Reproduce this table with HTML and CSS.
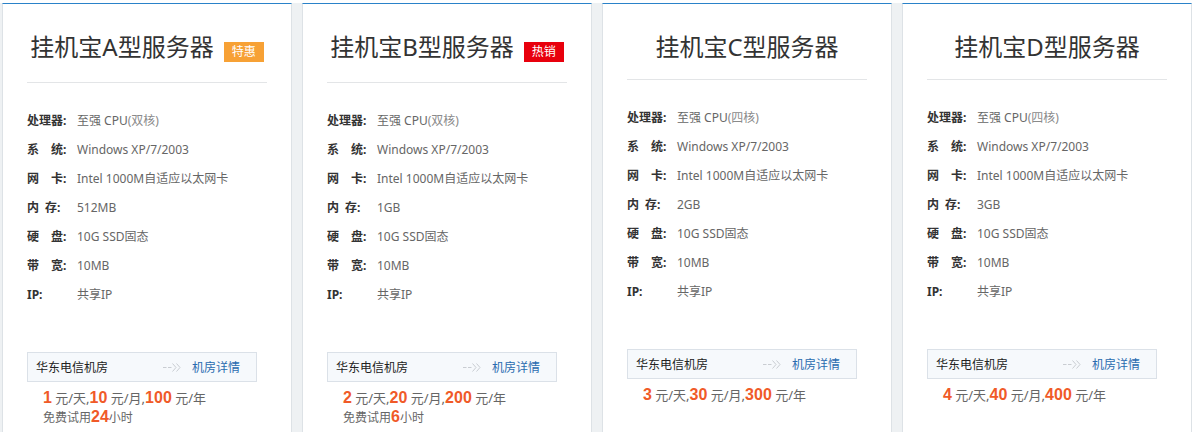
FILE: index.html
```html
<!DOCTYPE html>
<html lang="zh-CN">
<head>
<meta charset="utf-8">
<title>挂机宝服务器</title>
<link rel="stylesheet" href="styles.css">
</head>
<body>
<div class="row">
  <div class="card">
    <h3 class="title">挂机宝A型服务器<span class="badge badge-sale">特惠</span></h3>
    <ul class="specs">
      <li><span class="lbl">处理器:</span><span class="val">至强 CPU<span class="dim">(双核)</span></span></li>
      <li><span class="lbl">系&emsp;统:</span><span class="val">Windows XP/7/2003</span></li>
      <li><span class="lbl">网&emsp;卡:</span><span class="val">Intel 1000M自适应以太网卡</span></li>
      <li><span class="lbl">内&ensp;存:</span><span class="val">512MB</span></li>
      <li><span class="lbl">硬&emsp;盘:</span><span class="val">10G SSD固态</span></li>
      <li><span class="lbl">带&emsp;宽:</span><span class="val">10MB</span></li>
      <li><span class="lbl">IP:</span><span class="val">共享IP</span></li>
    </ul>
    <div class="room">
      <span class="room-name">华东电信机房</span>
      <span class="room-link"><svg class="arrow" width="18" height="10" viewBox="0 0 18 10"><path d="M0 5.5H3.5M5 5.5H8.5" stroke="#c9cdd2" fill="none"/><path d="M9.5 1.5L13 5.5L9.5 9.5M13.5 1.5L17 5.5L13.5 9.5" stroke="#c9cdd2" fill="none"/></svg><a class="detail">机房详情</a></span>
    </div>
    <p class="price"><b>1</b> 元/天,<b>10</b> 元/月,<b>100</b> 元/年</p>
    <p class="trial">免费试用<b>24</b>小时</p>
  </div>
  <div class="card">
    <h3 class="title">挂机宝B型服务器<span class="badge badge-hot">热销</span></h3>
    <ul class="specs">
      <li><span class="lbl">处理器:</span><span class="val">至强 CPU<span class="dim">(双核)</span></span></li>
      <li><span class="lbl">系&emsp;统:</span><span class="val">Windows XP/7/2003</span></li>
      <li><span class="lbl">网&emsp;卡:</span><span class="val">Intel 1000M自适应以太网卡</span></li>
      <li><span class="lbl">内&ensp;存:</span><span class="val">1GB</span></li>
      <li><span class="lbl">硬&emsp;盘:</span><span class="val">10G SSD固态</span></li>
      <li><span class="lbl">带&emsp;宽:</span><span class="val">10MB</span></li>
      <li><span class="lbl">IP:</span><span class="val">共享IP</span></li>
    </ul>
    <div class="room">
      <span class="room-name">华东电信机房</span>
      <span class="room-link"><svg class="arrow" width="18" height="10" viewBox="0 0 18 10"><path d="M0 5.5H3.5M5 5.5H8.5" stroke="#c9cdd2" fill="none"/><path d="M9.5 1.5L13 5.5L9.5 9.5M13.5 1.5L17 5.5L13.5 9.5" stroke="#c9cdd2" fill="none"/></svg><a class="detail">机房详情</a></span>
    </div>
    <p class="price"><b>2</b> 元/天,<b>20</b> 元/月,<b>200</b> 元/年</p>
    <p class="trial">免费试用<b>6</b>小时</p>
  </div>
  <div class="card">
    <h3 class="title">挂机宝C型服务器</h3>
    <ul class="specs">
      <li><span class="lbl">处理器:</span><span class="val">至强 CPU<span class="dim">(四核)</span></span></li>
      <li><span class="lbl">系&emsp;统:</span><span class="val">Windows XP/7/2003</span></li>
      <li><span class="lbl">网&emsp;卡:</span><span class="val">Intel 1000M自适应以太网卡</span></li>
      <li><span class="lbl">内&ensp;存:</span><span class="val">2GB</span></li>
      <li><span class="lbl">硬&emsp;盘:</span><span class="val">10G SSD固态</span></li>
      <li><span class="lbl">带&emsp;宽:</span><span class="val">10MB</span></li>
      <li><span class="lbl">IP:</span><span class="val">共享IP</span></li>
    </ul>
    <div class="room">
      <span class="room-name">华东电信机房</span>
      <span class="room-link"><svg class="arrow" width="18" height="10" viewBox="0 0 18 10"><path d="M0 5.5H3.5M5 5.5H8.5" stroke="#c9cdd2" fill="none"/><path d="M9.5 1.5L13 5.5L9.5 9.5M13.5 1.5L17 5.5L13.5 9.5" stroke="#c9cdd2" fill="none"/></svg><a class="detail">机房详情</a></span>
    </div>
    <p class="price"><b>3</b> 元/天,<b>30</b> 元/月,<b>300</b> 元/年</p>
  </div>
  <div class="card">
    <h3 class="title">挂机宝D型服务器</h3>
    <ul class="specs">
      <li><span class="lbl">处理器:</span><span class="val">至强 CPU<span class="dim">(四核)</span></span></li>
      <li><span class="lbl">系&emsp;统:</span><span class="val">Windows XP/7/2003</span></li>
      <li><span class="lbl">网&emsp;卡:</span><span class="val">Intel 1000M自适应以太网卡</span></li>
      <li><span class="lbl">内&ensp;存:</span><span class="val">3GB</span></li>
      <li><span class="lbl">硬&emsp;盘:</span><span class="val">10G SSD固态</span></li>
      <li><span class="lbl">带&emsp;宽:</span><span class="val">10MB</span></li>
      <li><span class="lbl">IP:</span><span class="val">共享IP</span></li>
    </ul>
    <div class="room">
      <span class="room-name">华东电信机房</span>
      <span class="room-link"><svg class="arrow" width="18" height="10" viewBox="0 0 18 10"><path d="M0 5.5H3.5M5 5.5H8.5" stroke="#c9cdd2" fill="none"/><path d="M9.5 1.5L13 5.5L9.5 9.5M13.5 1.5L17 5.5L13.5 9.5" stroke="#c9cdd2" fill="none"/></svg><a class="detail">机房详情</a></span>
    </div>
    <p class="price"><b>4</b> 元/天,<b>40</b> 元/月,<b>400</b> 元/年</p>
  </div>
</div>
</body>
</html>
```

FILE: styles.css
```css
html, body {
  margin: 0;
  padding: 0;
  background: #ffffff;
  overflow: hidden;
}
body {
  font-family: "Noto Sans", "Noto Sans CJK SC", sans-serif;
  font-size: 12px;
  color: #666;
}
.row {
  display: flex;
  gap: 10px;
  margin-top: 3px;
  padding-left: 2px;
  height: 480px;
  background: #eef1f3;
  width: 1190px;
}
.card {
  flex: 0 0 auto;
  width: 290px;
  background: #fff;
  border: 1px solid #dde2e6;
  border-top: 1px solid #2a82c9;
  padding: 0 24px;
  box-sizing: border-box;
}
.title {
  margin: 0;
  padding: 28px 0 17px;
  font-size: 24px;
  line-height: 30px;
  font-weight: normal;
  color: #333;
  text-align: center;
  border-bottom: 1px solid #e3e5e7;
  white-space: nowrap;
}
.badge {
  display: inline-block;
  height: 20px;
  line-height: 20px;
  padding: 0 8px;
  margin-left: 10px;
  margin-bottom: 3px;
  font-size: 12px;
  color: #fff;
  vertical-align: baseline;
}
.badge-sale { background: #f7a135; }
.badge-hot { background: #e8000d; }
.specs {
  list-style: none;
  margin: 23px 0 0;
  padding: 0;
}
.specs li {
  display: flex;
  line-height: 29px;
  height: 29px;
}
.lbl {
  width: 50px;
  font-weight: bold;
  color: #333;
  white-space: nowrap;
}
.val { color: #666; }
.dim { color: #8a8a8a; }
.room {
  display: flex;
  justify-content: space-between;
  align-items: center;
  margin-top: 43px;
  width: 230px;
  height: 30px;
  box-sizing: border-box;
  padding: 0 16px 0 8px;
  background: #f6f9fc;
  border: 1px solid #dbe1e8;
}
.room-name { color: #222; }
.room-link {
  display: flex;
  align-items: center;
}
.arrow { display: block; }
.detail {
  margin-left: 11px;
  color: #2a6cb0;
  cursor: pointer;
}
.price {
  margin: 6px 0 0;
  padding-left: 16px;
  line-height: 20px;
  font-size: 13px;
  color: #666;
}
.price b, .trial b {
  font-family: "Liberation Sans", "Noto Sans", sans-serif;
  font-size: 16px;
  font-weight: bold;
  color: #f05a28;
}
.trial {
  margin: 0;
  padding-left: 16px;
  line-height: 18px;
  font-size: 12px;
  color: #666;
}
```
